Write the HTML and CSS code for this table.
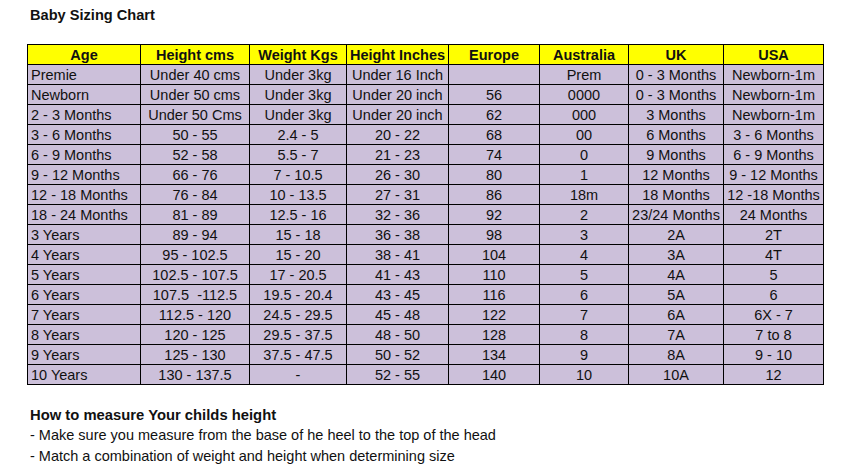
FILE: index.html
```html
<!DOCTYPE html>
<html>
<head>
<meta charset="utf-8">
<link rel="stylesheet" href="styles.css">
</head>
<body>
<div class="page">
  <h1 class="title">Baby Sizing Chart</h1>
  <table class="chart">
    <colgroup>
      <col class="c-age"><col class="c-hcm"><col class="c-wkg"><col class="c-hin"><col class="c-eu"><col class="c-au"><col class="c-uk"><col class="c-us">
    </colgroup>
    <thead>
      <tr><th>Age</th><th>Height cms</th><th>Weight Kgs</th><th>Height Inches</th><th>Europe</th><th>Australia</th><th>UK</th><th>USA</th></tr>
    </thead>
    <tbody>
      <tr><td>Premie</td><td>Under 40 cms</td><td>Under 3kg</td><td>Under 16 Inch</td><td></td><td>Prem</td><td>0 - 3 Months</td><td>Newborn-1m</td></tr>
      <tr><td>Newborn</td><td>Under 50 cms</td><td>Under 3kg</td><td>Under 20 inch</td><td>56</td><td>0000</td><td>0 - 3 Months</td><td>Newborn-1m</td></tr>
      <tr><td>2 - 3 Months</td><td>Under 50 Cms</td><td>Under 3kg</td><td>Under 20 inch</td><td>62</td><td>000</td><td>3 Months</td><td>Newborn-1m</td></tr>
      <tr><td>3 - 6 Months</td><td>50 - 55</td><td>2.4 - 5</td><td>20 - 22</td><td>68</td><td>00</td><td>6 Months</td><td>3 - 6 Months</td></tr>
      <tr><td>6 - 9 Months</td><td>52 - 58</td><td>5.5 - 7</td><td>21 - 23</td><td>74</td><td>0</td><td>9 Months</td><td>6 - 9 Months</td></tr>
      <tr><td>9 - 12 Months</td><td>66 - 76</td><td>7 - 10.5</td><td>26 - 30</td><td>80</td><td>1</td><td>12 Months</td><td>9 - 12 Months</td></tr>
      <tr><td>12 - 18 Months</td><td>76 - 84</td><td>10 - 13.5</td><td>27 - 31</td><td>86</td><td>18m</td><td>18 Months</td><td>12 -18 Months</td></tr>
      <tr><td>18 - 24 Months</td><td>81 - 89</td><td>12.5 - 16</td><td>32 - 36</td><td>92</td><td>2</td><td>23/24 Months</td><td>24 Months</td></tr>
      <tr><td>3 Years</td><td>89 - 94</td><td>15 - 18</td><td>36 - 38</td><td>98</td><td>3</td><td>2A</td><td>2T</td></tr>
      <tr><td>4 Years</td><td>95 - 102.5</td><td>15 - 20</td><td>38 - 41</td><td>104</td><td>4</td><td>3A</td><td>4T</td></tr>
      <tr><td>5 Years</td><td>102.5 - 107.5</td><td>17 - 20.5</td><td>41 - 43</td><td>110</td><td>5</td><td>4A</td><td>5</td></tr>
      <tr><td>6 Years</td><td>107.5 &nbsp;-112.5</td><td>19.5 - 20.4</td><td>43 - 45</td><td>116</td><td>6</td><td>5A</td><td>6</td></tr>
      <tr><td>7 Years</td><td>112.5 - 120</td><td>24.5 - 29.5</td><td>45 - 48</td><td>122</td><td>7</td><td>6A</td><td>6X - 7</td></tr>
      <tr><td>8 Years</td><td>120 - 125</td><td>29.5 - 37.5</td><td>48 - 50</td><td>128</td><td>8</td><td>7A</td><td>7 to 8</td></tr>
      <tr><td>9 Years</td><td>125 - 130</td><td>37.5 - 47.5</td><td>50 - 52</td><td>134</td><td>9</td><td>8A</td><td>9 - 10</td></tr>
      <tr><td>10 Years</td><td>130 - 137.5</td><td>-</td><td>52 - 55</td><td>140</td><td>10</td><td>10A</td><td>12</td></tr>
    </tbody>
  </table>
  <div class="notes">
    <h2 class="notes-title">How to measure Your childs height</h2>
    <p class="note">- Make sure you measure from the base of he heel to the top of the head</p>
    <p class="note">- Match a combination of weight and height when determining size</p>
  </div>
</div>
</body>
</html>
```

FILE: styles.css
```css
html, body {
  margin: 0;
  padding: 0;
  background: #ffffff;
}

body {
  font-family: "Liberation Sans", Arial, sans-serif;
  color: #111111;
}

.page {
  padding: 7px 0 0 27px;
}

.title {
  margin: 0 0 0 3px;
  font-size: 14.6px;
  line-height: 17px;
  font-weight: bold;
}

.chart {
  margin-top: 20px;
  border-collapse: collapse;
  table-layout: fixed;
  width: 797px;
  font-size: 14.5px;
}

.c-age { width: 113px; }
.c-hcm { width: 109px; }
.c-wkg { width: 97px; }
.c-hin { width: 102px; }
.c-eu  { width: 91px; }
.c-au  { width: 89px; }
.c-uk  { width: 95px; }
.c-us  { width: 100px; }

.chart th,
.chart td {
  border: 1px solid #000000;
  height: 17px;
  padding: 2px 1px 0;
  line-height: 17px;
  text-align: center;
  white-space: nowrap;
  overflow: hidden;
}

.chart th {
  background: #ffff00;
  font-weight: bold;
}

.chart td {
  background: #ccc0da;
}

.chart td:first-child {
  text-align: left;
  padding-left: 3px;
}

.notes {
  margin: 20px 0 0 3px;
}

.notes-title {
  margin: 0;
  font-size: 14.8px;
  line-height: 20px;
  font-weight: bold;
}

.note {
  margin: 0;
  font-size: 14.5px;
  line-height: 21px;
}
```
